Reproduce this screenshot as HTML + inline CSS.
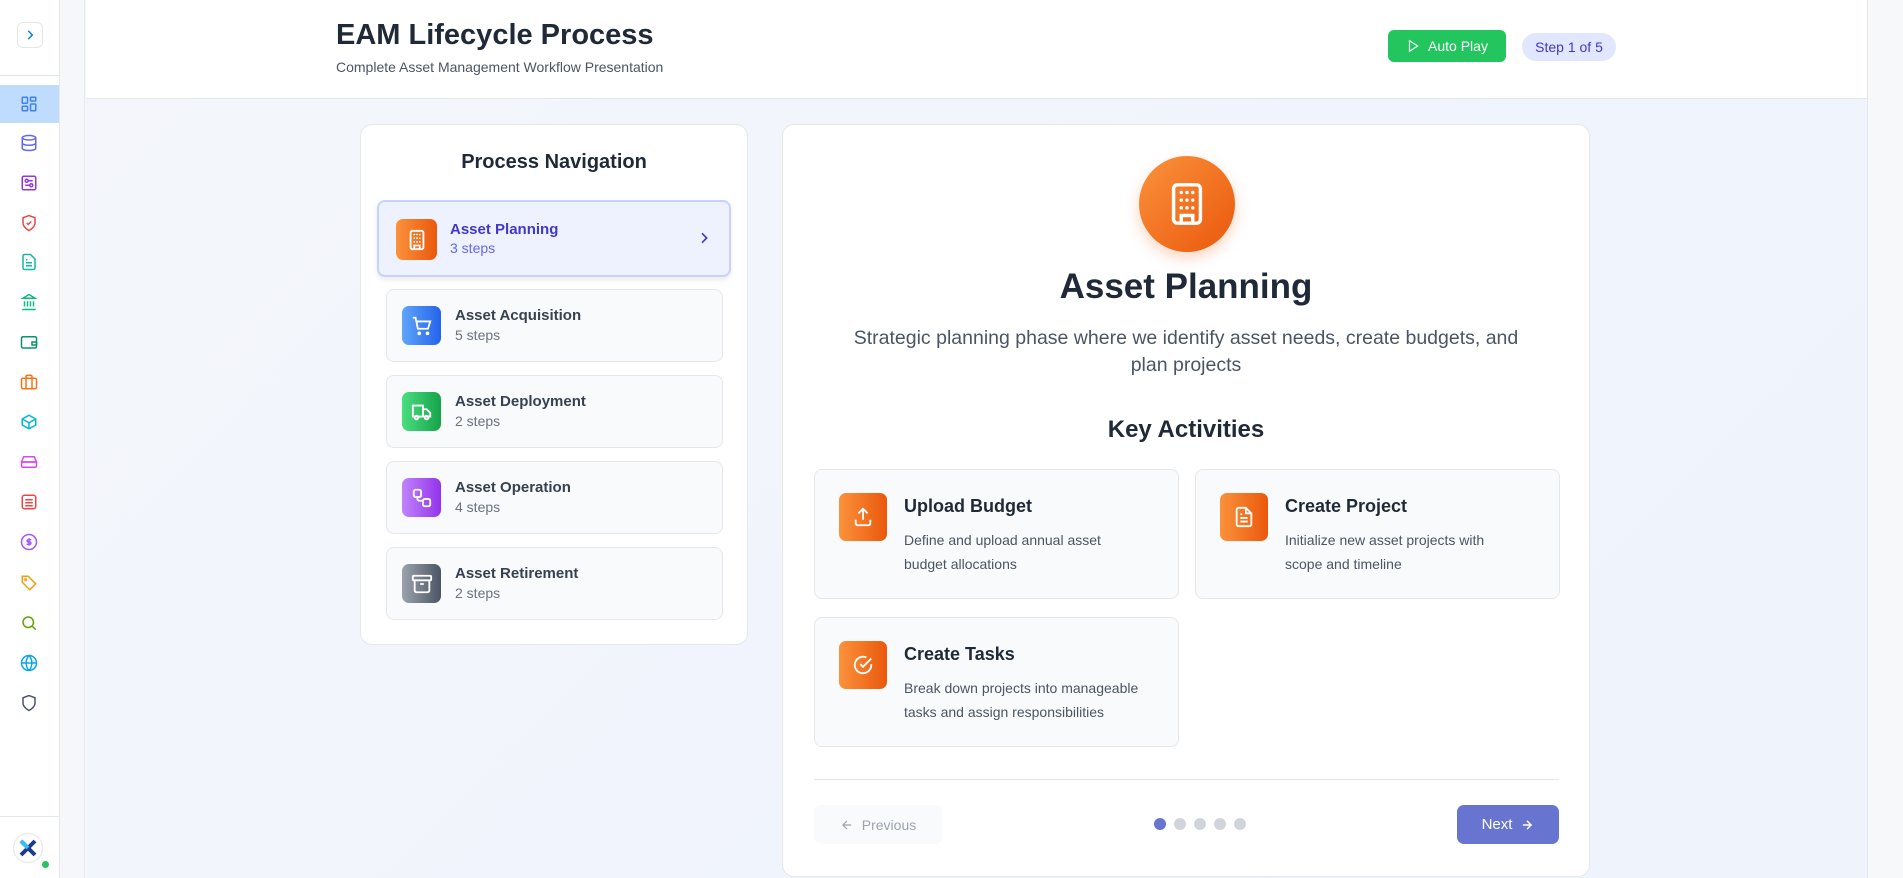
<!DOCTYPE html>
<html><head><meta charset="utf-8"><style>
*{box-sizing:border-box;margin:0;padding:0}
body{width:1903px;height:878px;overflow:hidden;font-family:"Liberation Sans",sans-serif;background:linear-gradient(135deg,#f4f6fb,#eef3fc);position:relative;color:#1f2937}
.abs{position:absolute}
.sb{left:0;top:0;width:60px;height:878px;background:#fff;border-right:1px solid #e5e7eb}
.strip{left:60px;top:0;width:25px;height:878px;background:#f6f7fa;border-right:1px solid #e8eaee}
.rstrip{left:1867px;top:0;width:36px;height:878px;background:#f7f8fa;border-left:1px solid #e5e7eb}
.hdr{left:86px;top:0;width:1781px;height:99px;background:#fff;border-bottom:1px solid #e3e7ee}
.sic{position:absolute;left:20px;width:18px;height:18px}
.card{background:#fff;border:1px solid #e5e7eb;border-radius:12px}
.item{position:absolute;left:386px;width:337px;height:73px;background:#f9fafb;border:1px solid #e5e7eb;border-radius:8px}
.item .ic{position:absolute;left:15px;top:16px;width:39px;height:39px;border-radius:7px;display:flex;align-items:center;justify-content:center}
.item .t{position:absolute;left:68px;top:17px;font-size:15px;font-weight:bold;color:#374151}
.item .s{position:absolute;left:68px;top:37px;font-size:14px;color:#6b7280}
.act{position:absolute;width:365px;height:130px;background:#f9fafb;border:1px solid #e5e7eb;border-radius:8px}
.act .ic{position:absolute;left:24px;top:23px;width:48px;height:48px;border-radius:7px;background:linear-gradient(90deg,#fb923c,#ea580c);display:flex;align-items:center;justify-content:center}
.act .t{position:absolute;left:89px;top:26px;font-size:18px;font-weight:bold;color:#1f2937}
.act .d{position:absolute;left:89px;top:58px;width:238px;font-size:14px;line-height:24px;color:#4b5563}
.dot{position:absolute;top:818px;width:12px;height:12px;border-radius:50%;background:#d1d5db}
</style></head><body>
<div class="abs sb">
 <div class="abs" style="left:17px;top:22px;width:26px;height:26px;border:1px solid #e5e7eb;border-radius:6px;display:flex;align-items:center;justify-content:center"><svg width="14" height="14" viewBox="0 0 24 24" fill="none" stroke="#0284c7" stroke-width="2.5"><path d="M9 5l7 7-7 7"/></svg></div>
 <div class="abs" style="left:0;top:75px;width:60px;height:1px;background:#e5e7eb"></div>
 <div class="abs" style="left:0;top:85px;width:59px;height:38px;background:#bfdbfe"></div>
 <svg class="sic" style="top:95px" viewBox="0 0 24 24" fill="none" stroke="#3b82f6" stroke-width="2"><rect x="3" y="3" width="7" height="8" rx="1"/><rect x="14" y="3" width="7" height="5" rx="1"/><rect x="3" y="15" width="7" height="6" rx="1"/><rect x="14" y="12" width="7" height="9" rx="1"/></svg>
 <svg class="sic" style="top:134px" viewBox="0 0 24 24" fill="none" stroke="#6366f1" stroke-width="2"><ellipse cx="12" cy="5" rx="9" ry="3"/><path d="M3 5v14c0 1.7 4 3 9 3s9-1.3 9-3V5M3 12c0 1.7 4 3 9 3s9-1.3 9-3"/></svg>
 <svg class="sic" style="top:174px" viewBox="0 0 24 24" fill="none" stroke="#9333ea" stroke-width="2"><rect x="3" y="3" width="18" height="18" rx="2"/><circle cx="9" cy="9" r="2"/><circle cx="15" cy="15" r="2"/><path d="M11 9h6M7 15h6"/></svg>
 <svg class="sic" style="top:214px" viewBox="0 0 24 24" fill="none" stroke="#ef4444" stroke-width="2"><path d="M12 22s8-4 8-10V5l-8-3-8 3v7c0 6 8 10 8 10z"/><path d="M9 12l2 2 4-4"/></svg>
 <svg class="sic" style="top:253px" viewBox="0 0 24 24" fill="none" stroke="#14b8a6" stroke-width="2"><path d="M14 2H6a2 2 0 0 0-2 2v16a2 2 0 0 0 2 2h12a2 2 0 0 0 2-2V8z"/><path d="M8 13h8M8 17h8M8 9h2"/></svg>
 <svg class="sic" style="top:293px" viewBox="0 0 24 24" fill="none" stroke="#10b981" stroke-width="2"><path d="M3 22h18M6 18v-7M10 18v-7M14 18v-7M18 18v-7M12 2l8 5H4z"/></svg>
 <svg class="sic" style="top:333px" viewBox="0 0 24 24" fill="none" stroke="#059669" stroke-width="2"><rect x="2" y="5" width="20" height="15" rx="2"/><path d="M16 12h6v4h-6z"/></svg>
 <svg class="sic" style="top:373px" viewBox="0 0 24 24" fill="none" stroke="#f97316" stroke-width="2"><rect x="2" y="7" width="20" height="14" rx="2"/><path d="M16 21V5a2 2 0 0 0-2-2h-4a2 2 0 0 0-2 2v16"/></svg>
 <svg class="sic" style="top:413px" viewBox="0 0 24 24" fill="none" stroke="#06b6d4" stroke-width="2"><path d="M21 8l-9-5-9 5v8l9 5 9-5z"/><path d="M3 8l9 5 9-5M12 13v8"/></svg>
 <svg class="sic" style="top:453px" viewBox="0 0 24 24" fill="none" stroke="#d946ef" stroke-width="2"><path d="M22 12H2l3-7h14z"/><rect x="2" y="12" width="20" height="7" rx="2"/><path d="M6 16h.01M10 16h.01"/></svg>
 <svg class="sic" style="top:493px" viewBox="0 0 24 24" fill="none" stroke="#ef4444" stroke-width="2"><rect x="3" y="3" width="18" height="18" rx="3"/><path d="M7 9h10M7 13h10M7 17h10"/></svg>
 <svg class="sic" style="top:533px" viewBox="0 0 24 24" fill="none" stroke="#a855f7" stroke-width="2"><circle cx="12" cy="12" r="10"/><path d="M15 9h-4a1.5 1.5 0 0 0 0 3h2a1.5 1.5 0 0 1 0 3H9M12 7v10"/></svg>
 <svg class="sic" style="top:574px" viewBox="0 0 24 24" fill="none" stroke="#f59e0b" stroke-width="2"><path d="M3 3h8l10 10-8 8L3 11z"/><circle cx="7.5" cy="7.5" r="1"/></svg>
 <svg class="sic" style="top:614px" viewBox="0 0 24 24" fill="none" stroke="#65a30d" stroke-width="2"><circle cx="11" cy="11" r="7"/><path d="M21 21l-5-5"/></svg>
 <svg class="sic" style="top:654px" viewBox="0 0 24 24" fill="none" stroke="#0ea5e9" stroke-width="2"><circle cx="12" cy="12" r="10"/><path d="M2 12h20M12 2a15 15 0 0 1 0 20M12 2a15 15 0 0 0 0 20"/></svg>
 <svg class="sic" style="top:694px" viewBox="0 0 24 24" fill="none" stroke="#4b5563" stroke-width="2"><path d="M12 22s8-4 8-10V5l-8-3-8 3v7c0 6 8 10 8 10z"/></svg>
 <div class="abs" style="left:0;top:816px;width:60px;height:1px;background:#e5e7eb"></div>
 <div class="abs" style="left:13px;top:833px;width:30px;height:30px;border-radius:50%;background:#fff;border:1px solid #e5e7eb;display:flex;align-items:center;justify-content:center"><svg width="20" height="20" viewBox="0 0 20 20"><path d="M3 3l14 14M17 3L3 17" stroke="#1e3a8a" stroke-width="4"/><path d="M3 3l7 7" stroke="#38bdf8" stroke-width="4"/></svg></div>
 <div class="abs" style="left:42px;top:861px;width:7px;height:7px;border-radius:50%;background:#22c55e"></div>
</div>
<div class="abs strip"></div>
<div class="abs rstrip"></div>
<div class="abs hdr">
 <div class="abs" style="left:250px;top:19px;font-size:29px;font-weight:bold;color:#1f2937">EAM Lifecycle Process</div>
 <div class="abs" style="left:250px;top:59px;font-size:14px;color:#4b5563">Complete Asset Management Workflow Presentation</div>
 <div class="abs" style="left:1302px;top:30px;width:118px;height:32px;background:#22c55e;border-radius:6px;color:#fff;font-size:14px;display:flex;align-items:center;justify-content:center;gap:8px"><svg width="14" height="14" viewBox="0 0 24 24" fill="none" stroke="#fff" stroke-width="2"><path d="M6 3l14 9-14 9z"/></svg>Auto Play</div>
 <div class="abs" style="left:1436px;top:33px;width:94px;height:28px;background:#e0e7ff;border-radius:14px;color:#4338ca;font-size:14px;display:flex;align-items:center;justify-content:center">Step 1 of 5</div>
</div>

<div class="abs card" style="left:360px;top:124px;width:388px;height:521px">
 <div class="abs" style="left:0;width:386px;top:26px;text-align:center;font-size:20px;font-weight:bold;color:#1f2937">Process Navigation</div>
</div>
<div class="abs" style="left:377px;top:200px;width:354px;height:77px;background:#eef2ff;border:2px solid #c7d2fe;border-radius:8px;box-shadow:0 3px 6px rgba(0,0,0,.08)">
 <div class="abs" style="left:17px;top:17px;width:41px;height:41px;border-radius:7px;background:linear-gradient(90deg,#fb923c,#ea580c);display:flex;align-items:center;justify-content:center"><svg width="22" height="22" viewBox="0 0 24 24" fill="none" stroke="#fff" stroke-width="2" stroke-linecap="round"><rect x="5" y="2" width="14" height="20" rx="2"/><path d="M9 22v-4h6v4M9 6h.01M12 6h.01M15 6h.01M9 10h.01M12 10h.01M15 10h.01M9 14h.01M12 14h.01M15 14h.01"/></svg></div>
 <div class="abs" style="left:71px;top:19px;font-size:15px;font-weight:bold;color:#4338ca">Asset Planning</div>
 <div class="abs" style="left:71px;top:38px;font-size:14px;color:#6366f1">3 steps</div>
 <svg class="abs" style="left:317px;top:28px" width="16" height="16" viewBox="0 0 24 24" fill="none" stroke="#4338ca" stroke-width="2.5"><path d="M9 5l7 7-7 7"/></svg>
</div>
<div class="item" style="top:289px"><div class="ic" style="background:linear-gradient(90deg,#60a5fa,#2563eb)"><svg width="22" height="22" viewBox="0 0 24 24" fill="none" stroke="#fff" stroke-width="2"><path d="M2 3h3l2.5 12h11L21 7H6"/><circle cx="9" cy="20" r="1"/><circle cx="18" cy="20" r="1"/></svg></div><div class="t">Asset Acquisition</div><div class="s">5 steps</div></div>
<div class="item" style="top:375px"><div class="ic" style="background:linear-gradient(90deg,#4ade80,#16a34a)"><svg width="22" height="22" viewBox="0 0 24 24" fill="none" stroke="#fff" stroke-width="2"><path d="M2 5h11v12H2zM13 9h4l4 4v4h-8"/><circle cx="6" cy="18" r="2"/><circle cx="17" cy="18" r="2"/></svg></div><div class="t">Asset Deployment</div><div class="s">2 steps</div></div>
<div class="item" style="top:461px"><div class="ic" style="background:linear-gradient(90deg,#c084fc,#9333ea)"><svg width="22" height="22" viewBox="0 0 24 24" fill="none" stroke="#fff" stroke-width="2"><rect x="3" y="3" width="8" height="8" rx="2"/><rect x="13" y="13" width="8" height="8" rx="2"/><path d="M7 11v2a2 2 0 0 0 2 2h4"/></svg></div><div class="t">Asset Operation</div><div class="s">4 steps</div></div>
<div class="item" style="top:547px"><div class="ic" style="background:linear-gradient(90deg,#9ca3af,#4b5563)"><svg width="22" height="22" viewBox="0 0 24 24" fill="none" stroke="#fff" stroke-width="2"><rect x="2" y="3" width="20" height="5" rx="1"/><path d="M4 8v11a2 2 0 0 0 2 2h12a2 2 0 0 0 2-2V8M10 12h4"/></svg></div><div class="t">Asset Retirement</div><div class="s">2 steps</div></div>

<div class="abs card" style="left:782px;top:124px;width:808px;height:753px"></div>
<div class="abs" style="left:1139px;top:156px;width:96px;height:96px;border-radius:50%;background:linear-gradient(135deg,#fb923c,#ea580c);box-shadow:0 6px 14px rgba(234,88,12,.25);display:flex;align-items:center;justify-content:center"><svg width="46" height="46" viewBox="0 0 24 24" fill="none" stroke="#fff" stroke-width="1.8" stroke-linecap="round"><rect x="5" y="2" width="14" height="20" rx="2"/><path d="M9 22v-4h6v4M9 6h.01M12 6h.01M15 6h.01M9 10h.01M12 10h.01M15 10h.01M9 14h.01M12 14h.01M15 14h.01"/></svg></div>
<div class="abs" style="left:782px;width:808px;top:267px;text-align:center;font-size:35px;font-weight:bold;color:#1f2937">Asset Planning</div>
<div class="abs" style="left:842px;width:688px;top:325px;text-align:center;font-size:19.5px;line-height:27px;color:#4b5563">Strategic planning phase where we identify asset needs, create budgets, and plan projects</div>
<div class="abs" style="left:782px;width:808px;top:416px;text-align:center;font-size:24px;font-weight:bold;color:#1f2937">Key Activities</div>

<div class="act" style="left:814px;top:469px"><div class="ic"><svg width="22" height="22" viewBox="0 0 24 24" fill="none" stroke="#fff" stroke-width="2"><path d="M12 3v12M7 8l5-5 5 5M4 15v4a2 2 0 0 0 2 2h12a2 2 0 0 0 2-2v-4"/></svg></div><div class="t">Upload Budget</div><div class="d">Define and upload annual asset budget allocations</div></div>
<div class="act" style="left:1195px;top:469px"><div class="ic"><svg width="22" height="22" viewBox="0 0 24 24" fill="none" stroke="#fff" stroke-width="2"><path d="M14 2H6a2 2 0 0 0-2 2v16a2 2 0 0 0 2 2h12a2 2 0 0 0 2-2V8z"/><path d="M14 2v6h6M8 13h8M8 17h8M8 9h2"/></svg></div><div class="t">Create Project</div><div class="d">Initialize new asset projects with scope and timeline</div></div>
<div class="act" style="left:814px;top:617px"><div class="ic"><svg width="22" height="22" viewBox="0 0 24 24" fill="none" stroke="#fff" stroke-width="2"><path d="M21 11v1a9 9 0 1 1-5.3-8.2"/><path d="M9 11l3 3 9-9"/></svg></div><div class="t">Create Tasks</div><div class="d">Break down projects into manageable tasks and assign responsibilities</div></div>

<div class="abs" style="left:814px;top:779px;width:745px;height:1px;background:#e5e7eb"></div>
<div class="abs" style="left:814px;top:805px;width:128px;height:39px;background:#f9fafb;border-radius:7px;color:#9ca3af;font-size:14px;display:flex;align-items:center;justify-content:center;gap:8px"><svg width="14" height="14" viewBox="0 0 24 24" fill="none" stroke="#9ca3af" stroke-width="2"><path d="M19 12H5M12 19l-7-7 7-7"/></svg>Previous</div>
<div class="dot" style="left:1154px;background:#6875d0"></div>
<div class="dot" style="left:1174px"></div>
<div class="dot" style="left:1194px"></div>
<div class="dot" style="left:1214px"></div>
<div class="dot" style="left:1234px"></div>
<div class="abs" style="left:1457px;top:805px;width:102px;height:39px;background:#6875d0;border-radius:7px;color:#fff;font-size:15px;display:flex;align-items:center;justify-content:center;gap:8px">Next<svg width="14" height="14" viewBox="0 0 24 24" fill="none" stroke="#fff" stroke-width="2.5"><path d="M5 12h14M12 5l7 7-7 7"/></svg></div>
</body></html>
